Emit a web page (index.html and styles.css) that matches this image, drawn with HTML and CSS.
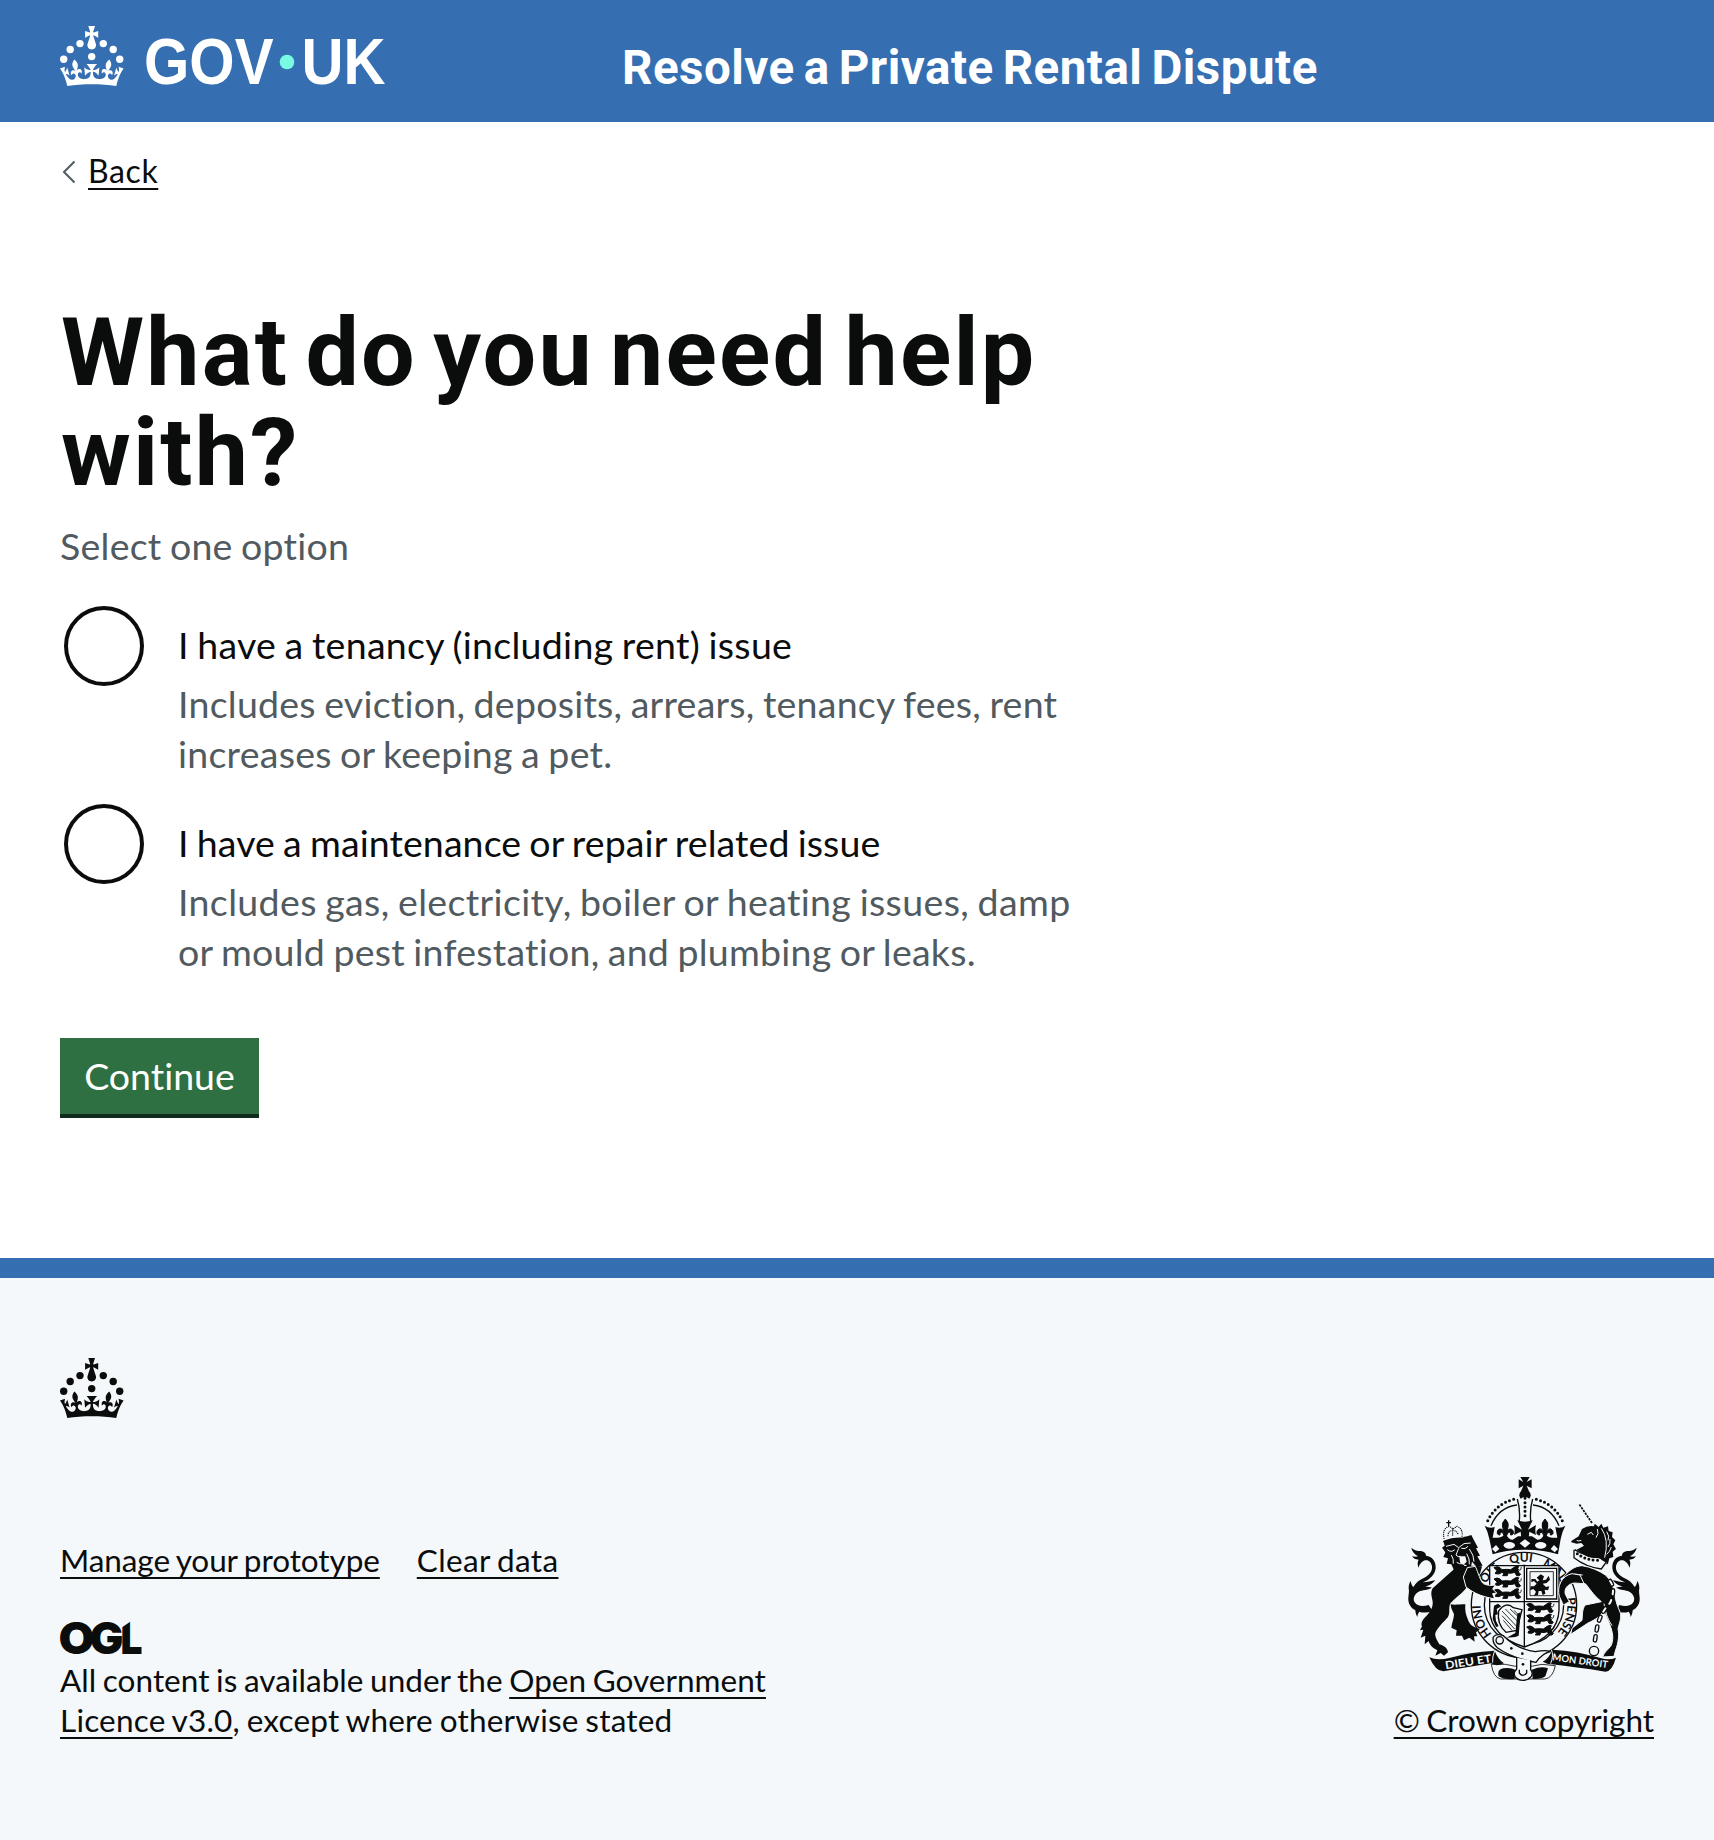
FILE: index.html
```html
<!DOCTYPE html>
<html lang="en">
<head>
<meta charset="utf-8">
<title>What do you need help with?</title>
<link rel="stylesheet" href="styles.css">
</head>
<body>
<header class="header">
  <a class="header-logo" href="#" aria-label="GOV.UK">
    <svg class="logo" viewBox="0 0 324 60" width="324" height="60">
      <defs>
        <g id="crown">
          <circle cx="20" cy="17.6" r="3.7"/><circle cx="10.2" cy="23.5" r="3.7"/><circle cx="3.7" cy="33.2" r="3.7"/>
          <circle cx="31.7" cy="30.6" r="3.7"/><circle cx="43.3" cy="17.6" r="3.7"/><circle cx="53.2" cy="23.5" r="3.7"/><circle cx="59.7" cy="33.2" r="3.7"/>
          <path d="M33.1,9.8c.2-.1.3-.3.5-.5l4.6,2.4v-6.8l-4.6,1.5c-.1-.2-.3-.3-.5-.5l1.9-5.9h-6.7l1.9,5.9c-.2.1-.3.3-.5.5l-4.6-1.5v6.8l4.6-2.4c.1.2.3.3.5.5l-2.6,8c-.9,2.8,1.2,5.7,4.1,5.7h0c3,0,5.1-2.9,4.1-5.7l-2.6-8ZM37,37.9s-3.4,3.8-4.1,6.1c2.2,0,4.2-.5,6.4-2.8l-.7,8.5c-2-2.8-4.4-4.1-5.7-3.8.1,3.1.5,6.7,5.8,7.2,3.7.3,6.7-1.5,7-3.8.4-2.6-2-4.3-3.7-1.6-1.4-4.5,2.4-6.1,4.9-3.2-1.9-4.5-1.8-7.7,2.4-10.9,3,4,2.6,7.3-1.2,11.1,2.4-1.3,6.2,0,4,4.6-1.2-2.8-3.7-2.2-4.2.2-.3,1.7.7,3.7,3,4.2,1.9.3,4.7-.9,7-5.9-1.3,0-2.4.7-3.9,1.7l2.4-8c.6,2.3,1.4,3.7,2.2,4.5.6-1.6.5-2.8,0-5.3l5,1.8c-2.6,3.6-5.2,8.7-7.3,17.5-7.4-1.1-15.7-1.7-24.5-1.7h0c-8.8,0-17.1.6-24.5,1.7-2.1-8.9-4.7-13.9-7.3-17.5l5-1.8c-.5,2.5-.6,3.7,0,5.3.8-.8,1.6-2.3,2.2-4.5l2.4,8c-1.5-1-2.6-1.7-3.9-1.7,2.3,5,5.2,6.2,7,5.9,2.3-.4,3.3-2.4,3-4.2-.5-2.4-3-3.1-4.2-.2-2.2-4.6,1.6-6,4-4.6-3.7-3.7-4.2-7.1-1.2-11.1,4.2,3.2,4.3,6.4,2.4,10.9,2.5-2.8,6.3-1.3,4.9,3.2-1.8-2.7-4.1-1-3.7,1.6.3,2.3,3.3,4.1,7,3.8,5.4-.5,5.7-4.2,5.8-7.2-1.3-.2-3.7,1-5.7,3.8l-.7-8.5c2.2,2.3,4.2,2.7,6.4,2.8-.7-2.3-4.1-6.1-4.1-6.1h10.6Z"/>
        </g>
      </defs>
      <use href="#crown"/>
      <text class="logo-word" x="84" y="58" textLength="129.500" lengthAdjust="spacingAndGlyphs">GOV</text>
      <text class="logo-word" x="241.500" y="58" textLength="84" lengthAdjust="spacingAndGlyphs">UK</text>
      <circle class="logo-dot" cx="227" cy="36" r="7.3"/>
    </svg>
  </a>
  <a class="service-name" href="#">Resolve a Private Rental Dispute</a>
</header>

<main class="main">
  <a class="back-link" href="#">
    <svg class="back-icon" viewBox="0 0 14 24" width="14" height="24"><path d="M12.500 1.500 2 12 12.500 22.500"/></svg><span class="link">Back</span>
  </a>
  <form class="form">
    <h1 class="title">What do you need help with?</h1>
    <p class="hint">Select one option</p>
    <div class="radios">
      <div class="radio">
        <input class="radio-input" type="radio" name="issue" id="tenancy">
        <div class="radio-text">
          <label class="radio-label" for="tenancy">I have a tenancy (including rent) issue</label>
          <p class="hint">Includes eviction, deposits, arrears, tenancy fees, rent increases or keeping a pet.</p>
        </div>
      </div>
      <div class="radio">
        <input class="radio-input" type="radio" name="issue" id="repair">
        <div class="radio-text">
          <label class="radio-label radio-label-tight" for="repair">I have a maintenance or repair related issue</label>
          <p class="hint"><span class="hint-loose">Includes gas, electricity, boiler or heating issues, damp</span> or mould pest infestation, and plumbing or leaks.</p>
        </div>
      </div>
    </div>
    <button class="button" type="button">Continue</button>
  </form>
</main>

<footer class="footer">
  <svg class="footer-crown" viewBox="0 0 64 60" width="64" height="60"><use href="#crown"/></svg>
  <div class="footer-row">
    <div class="footer-meta">
      <nav class="footer-links"><a class="link" href="#">Manage your prototype</a><a class="link link-loose" href="#">Clear data</a></nav>
      <svg class="ogl" viewBox="0 0 82 34" width="82" height="34">
        <text class="ogl-word" x="-1.500" y="33" textLength="36" lengthAdjust="spacingAndGlyphs">O</text>
        <text class="ogl-word" x="29.500" y="33" textLength="34" lengthAdjust="spacingAndGlyphs">G</text>
        <text class="ogl-word" x="60.500" y="33" textLength="22" lengthAdjust="spacingAndGlyphs">L</text>
        <path class="ogl-cut" d="M62-2h10v1.500l-9.500 6.500h-.5z"/>
      </svg>
      <p class="licence">All content is available under the <a class="link" href="#">Open Government <span class="licence-version">Licence v3.0</span></a><span class="licence-version">, except where otherwise stated</span></p>
    </div>
    <a class="copyright" href="#">
      <svg class="arms" viewBox="84 50 696 612" width="232" height="204">
        <defs>
          <path id="garter-path" d="M432 564A130 130 0 0 1 432 304A130 130 0 0 1 432 564"/>
          <path id="tail" d="M94 262C104 270 112 272 122 272C134 274 138 280 138 286C156 288 168 302 167 322C166 342 150 358 128 366C144 366 152 362 166 360C156 370 150 376 136 378C144 380 150 380 156 382C142 390 128 388 116 394C102 402 98 416 104 426C112 438 128 440 146 434L158 452C140 458 128 458 118 454C114 460 112 464 112 470C108 464 106 456 106 450C92 442 84 430 85 412C86 400 88 394 86 384C86 374 88 368 92 362C94 372 96 376 100 380C108 366 118 360 130 354C146 346 158 334 156 318C154 306 146 298 136 300C126 302 118 312 116 322C112 314 112 304 116 298C106 298 100 294 96 288C104 290 110 290 114 288C104 282 96 274 94 262Z"/>
          <g id="passant">
            <path class="arms-heavy" d="M342 322q10-6 18 0l6 6q14-2 26 0l12-8q4-4 12-2-4 6-2 12 2 8 8 12l-4 4h-8l-6-10q-10 4-20 2l-2 8h-14l4-6-6-4q-8 8-20 4l2-6 6 0z"/>
            <path class="arms-fine" d="M398 326q8-10 16 0t10-6"/>
          </g>
          <g id="passants"><use href="#passant"/><use href="#passant" y="34"/><use href="#passant" y="68"/></g>
          <path id="fleur" class="arms-heavy" d="M376 176q12 12 8 24l-4 14q4-10 14-8 8 4 6 14-2 4-8 4 2-8-4-8-6 0-8 10v12h-8v-12q-2-10-8-10-6 0-4 8-6 0-8-4-2-10 6-14 10-2 14 8l-4-14q-4-12 8-24z"/>
        </defs>

        <!-- crown -->
        <path d="M421 50h28l-9 15 15-8v27l-15-8 7 17h-24l7-17-14 8v-27l14 8z"/>
        <circle cx="435" cy="105" r="17"/>
        <path class="arms-bg" d="M421 116q14-12 28 0l2 62h-32z"/>
        <path class="arms-line" d="M412 116q9 30 6 66M458 116q-9 30-6 66M411 134q-54 6-78 62M459 134q54 6 78 62"/>
        <path class="arms-beads" d="M401 117Q344 132 319 190M469 117Q526 132 551 190"/>
        <path class="arms-beads" d="M435 114V176"/>
        <path d="M314 196Q328 206 344 200L338 232H352Q366 232 376 220Q386 238 398 238L414 228H456L472 238Q486 238 494 220Q504 232 518 232H532L526 200Q542 206 556 196Q546 214 542 236L534 282Q496 268 435 268Q374 268 338 282L328 236Q324 214 314 196Z"/>
        <path d="M412 180q22 8 46 0l-14 28 24-14q-4 16 0 30l-20-10-2 20h-22l-2-20-20 10q4-14 0-30l24 14z"/>
        <use href="#fleur"/><use href="#fleur" x="119"/>
        <path class="arms-bg" d="M348 254l10 12-12 10-10-10zM522 254l12 12-10 10-12-10zM435 237l16 12-16 13-16-13z"/>
        <ellipse class="arms-bg" cx="388" cy="255" rx="17" ry="10"/><ellipse class="arms-bg" cx="482" cy="255" rx="17" ry="10"/>

        <!-- garter -->
        <circle class="arms-line arms-bgfill" cx="432" cy="434" r="158"/>
        <circle class="arms-line" cx="432" cy="434" r="119"/>
        <g class="arms-motto">
          <text><textPath href="#garter-path" startOffset="108">HONI</textPath></text>
          <text><textPath href="#garter-path" startOffset="250">SOIT</textPath></text>
          <text><textPath href="#garter-path" startOffset="366">QUI</textPath></text>
          <text><textPath href="#garter-path" startOffset="464">MAL</textPath></text>
          <text><textPath href="#garter-path" startOffset="590">PENSE</textPath></text>
        </g>

        <!-- lion -->
        <use href="#tail"/>
        <path d="M232 318L158 384C150 398 156 410 158 424C160 442 148 458 136 470C126 480 122 490 126 498L120 510L130 508L122 532L136 526L134 552L146 542C150 556 158 562 172 570L166 586L182 578L192 586L204 576C202 562 192 556 178 552C172 540 164 530 166 518C174 500 190 486 204 470C212 456 204 440 212 428C224 414 250 398 262 378L300 340L306 318L276 316Z"/>
        <path d="M212 432C224 434 236 432 256 432C254 450 258 466 264 478C268 490 276 500 300 506L288 516L292 528L282 528L284 544L268 532L252 540L246 526L228 526L230 510L214 502C216 486 222 474 222 462C218 452 212 444 212 432Z"/>
        <path d="M190 242Q224 234 262 228L274 224L280 236L294 262L288 264L300 286L292 288L308 316L288 318L276 304L272 324L254 312L244 334L232 322L222 330L214 312L200 310L204 294L190 290L196 276L186 262L194 256Z"/>
        <path class="arms-cut" d="M198 258l24-6 14 10 16-12 20-2M202 268q12 10 22 0M244 264q12 4 20-6M236 264l-8 20q6 8 14 4M214 284q8 12 6 26M268 266q14 18 14 38M260 280q10 16 8 32M230 306q8 6 18 4"/>
        <path class="arms-bg" d="M238 288h18l4 16-10 10-10-8z"/>
        <path class="arms-bg" d="M190 240q-10-40 14-48h26q24 8 20 40-30 0-60 8z"/>
        <path class="arms-beads arms-beads-small" d="M192 234q-6-30 16-36l12 8 10-8q20 6 16 32M204 226q0-14 14-16 16 2 16 14M218 206v20"/>
        <path class="arms-line" d="M190 244q28-12 62-10M206 180v18M199 187h14"/>

        <!-- unicorn -->
        <use href="#tail" transform="matrix(-1 0 0 1 864 0)"/>
        <path d="M574 242L596 228L606 206Q624 194 642 198L644 190L656 200L664 190L670 202L684 198L686 212L698 216L696 230L706 240L700 252L708 266L698 274L700 290L688 294L684 310L670 316L662 296L626 292L590 268L612 256L604 248L590 250L574 246Z"/>
        <path class="arms-cut" d="M664 204q24 34 10 88M680 214q10 14 4 26M690 236q2 14-6 24M694 260q-4 14-14 22M622 222l12-6 6 8M652 206q6 14-4 26M590 240q6 4 14 0"/>
        <path class="arms-horn" d="M636 188L598 132"/>
        <path class="arms-bg" d="M580 268q30 24 76 26l24 14-8 22-96-32z"/>
        <path class="arms-beads" d="M592 280q24 20 64 20"/><path class="arms-line" d="M582 268v24q36 28 82 34l14-20M584 268q30 20 74 22"/>
        <path class="arms-paw" d="M552 348C568 330 582 318 606 316C632 320 656 330 676 344C692 358 698 376 704 398C706 424 714 440 722 460C724 480 716 492 714 506C718 520 716 546 706 572L702 588L668 590C672 576 684 568 692 558C702 540 698 520 694 506C688 486 676 466 672 450C660 470 646 478 624 488L606 500L572 522L576 504L606 480C608 462 606 446 616 434L664 424C644 408 632 390 618 372C600 362 580 358 562 366Z"/>
        <path class="arms-cut" d="M562 346q24-8 46-2M672 430q6 40 24 66"/>
        <path class="arms-chain" d="M690 362q18 24 0 66-28 28-38 70l-10 58"/>
        <path class="arms-chain-hole" d="M690 362q18 24 0 66-28 28-38 70l-10 58"/>
        <circle class="arms-line arms-bgfill" cx="642" cy="572" r="14"/>

        <!-- shield -->
        <path class="arms-line arms-bgfill" d="M329 316H537V450Q534 528 433 560Q332 528 329 450Z"/>
        <path class="arms-line" d="M433 316V560M329 424H537"/>
        <use href="#passants"/><use href="#passants" x="98" y="110"/>
        <path class="arms-line" d="M440 324h90v92h-90z"/><path class="arms-fine" d="M450 334h70v72h-70z"/>
        <path d="M482 342l10 6-4 12 10-2 8-12 4 12-10 10-12 2 10 10 10-2-4 12-10-2 2 12-8 4-4-12-8 0-2 12-12 2 6-12-8-8-10 4 2-12 10 0 8-8-8-8-8 4 0-10 12 0 6 8 6-4-8-8z"/>
        <path class="arms-line" d="M356 452q-6 40 22 64l32-6 16-62-26-6q-22-20-44 10z"/>
        <path class="arms-fine" d="M366 452l44 46M366 466l38 40M370 480l26 30M376 446l40 40M390 446l28 26M402 450l18 18"/>
        <path d="M412 460l10-4-6 70-10 4-26 2 26-14z"/>
        <path d="M342 436l12-6 10 8-14 8 4 16-8 2 2 18 8 16-8 2-10-24z"/>

        <!-- paws over the shield -->
        <path class="arms-paw" d="M250 350L262 322L286 318C296 340 300 360 310 370C324 376 334 376 346 374L338 386L350 398L338 400L344 416L318 410C296 404 278 396 258 380Z"/>
        <path class="arms-paw" d="M576 340C544 346 530 380 538 408L550 434L568 424L556 402C552 388 560 372 582 368L612 370L600 344Z"/>

        <!-- belt, ribbon and motto scrolls -->
        <path class="arms-bgfill arms-line" d="M340 530q8-12 30-4 40 40 96 48 34-6 44 0-22 4-42 32-72-12-116-44-16-14-12-32z"/>
        <circle class="arms-line" cx="359" cy="540" r="11"/>
        <circle cx="394" cy="564" r="4"/><circle cx="427" cy="580" r="4"/>
        <path class="arms-fine arms-bgfill" d="M334 612q6 40 28 44h132q24-2 32-40l-40-4q-56 14-110 0z"/>
        <path d="M356 648q-6-20 14-24 20-4 36 4l-2 28q-30 4-48-8zM456 628q28-12 48-4l-8 24q-14 10-38 8z"/>
        <path class="arms-line arms-bgfill" d="M410 592v34q-12 12-4 24 8 10 23 10t25-12q6-12-2-20v-28"/>
        <path class="arms-line" d="M418 628v10q10 14 22 0v-10"/><circle cx="429" cy="612" r="4"/>
        <path d="M148 591q24 10 60 2 60-18 136-22 10 26 28 38-14 6-22 6l-18-6-142 24q-24 0-42-42z"/>
        <path d="M708 592q-20 8-44 2-70-22-148-26-8 26-28 36 14 8 28 8 70 8 160 22 20 0 32-42z"/>
        <path class="arms-cut" d="M344 571q-8 20-6 36M514 568q8 16-2 42"/>
        <text class="arms-scroll" transform="translate(197 627) rotate(-9)" textLength="140" lengthAdjust="spacingAndGlyphs">DIEU ET</text>
        <text class="arms-scroll arms-scroll-small" transform="translate(516 600) rotate(8)" textLength="168" lengthAdjust="spacingAndGlyphs">MON DROIT</text>
      </svg>
      <span class="link">© Crown copyright</span>
    </a>
  </div>
</footer>
</body>
</html>
```
FILE: styles.css
```css
* { box-sizing: border-box; }
body { margin: 0; background: #fff; color: #0b0c0c; font-family: Lato, sans-serif; font-variant-ligatures: none; }
a { color: inherit; text-decoration: none; }
p, h1 { margin: 0; }
.link { text-decoration: underline; text-decoration-thickness: 2px; text-underline-offset: 5px; text-decoration-skip-ink: none; }

.header { display: flex; align-items: flex-start; height: 122px; padding: 26px 60px 0; background: #366fb1; color: #fff; }
.header-logo { display: block; height: 60px; }
.logo { display: block; overflow: visible; fill: #fff; }
.logo-word { font: 700 64px "Liberation Sans", sans-serif; }
.logo-dot { fill: #79fbe3; }
.service-name { margin: 12px 0 0 238px; font: 700 47.5px/60px Roboto, sans-serif; letter-spacing: 0.5px; word-spacing: -3.3px; white-space: nowrap; }

.main { height: 1136px; padding: 29px 60px 0; }
.back-link { display: flex; align-items: flex-start; gap: 12px; font-size: 32px; line-height: 40px; letter-spacing: 0.6px; }
.back-icon { margin: 9px 0 0 2px; fill: none; stroke: #505a5f; stroke-width: 2; }
.form { width: 1040px; padding-top: 112px; }
.title { padding-left: 1px; font: 700 95px/100px Roboto, sans-serif; letter-spacing: 2.2px; word-spacing: -9.5px; }
.hint { color: #505a5f; font-size: 37.5px; line-height: 50px; letter-spacing: 0.25px; word-spacing: -1.5px; }
.hint-loose { letter-spacing: 0.36px; }
.title + .hint { margin-top: 17.5px; }
.radios { display: grid; gap: 21.5px; padding-top: 31.5px; }
.radio { display: flex; gap: 34px; }
.radio-input { appearance: none; flex: none; width: 80px; height: 80px; margin: 4px 0 0 4px; border: 4px solid #0b0c0c; border-radius: 50%; background: #fff; }
.radio-text { padding-top: 17.5px; }
.radio-label { display: block; margin-bottom: 9px; font-size: 37.5px; line-height: 50px; letter-spacing: 0.3px; word-spacing: -1.5px; }
.radio-label-tight { letter-spacing: 0.09px; }
.button { display: block; width: 199px; height: 80px; margin-top: 61.5px; padding: 0; border: 0; border-bottom: 4px solid #0f2b1c; background: #2f7042; color: #fff; font: 37.5px/50px Lato, sans-serif; font-variant-ligatures: none; }

.footer { height: 582px; padding: 80px 60px 0; border-top: 20px solid #366fb1; background: #f4f8fb; font-size: 31.5px; line-height: 40px; letter-spacing: 0.03px; word-spacing: -1.5px; }
.footer-crown { display: block; fill: #0b0c0c; }
.footer-row { display: flex; justify-content: space-between; align-items: flex-end; height: 322px; }
.footer-links { display: flex; gap: 37px; letter-spacing: -0.08px; }
.link-loose { letter-spacing: 0.35px; }
.ogl { display: block; overflow: visible; margin-top: 41px; letter-spacing: 0; }
.ogl-word { font: 900 44px Inter, sans-serif; fill: #0b0c0c; }
.ogl-cut { fill: #f4f8fb; }
.licence { width: 740px; margin-top: 5px; }
.licence-version { letter-spacing: 0.2px; }
.copyright { display: flex; flex-direction: column; align-items: center; letter-spacing: -0.05px; }
.arms { display: block; margin-bottom: 19px; overflow: visible; fill: #0b0c0c; letter-spacing: 0; word-spacing: 0; }
.arms-bg { fill: #f4f8fb; }
.arms-line, .arms-fine, .arms-cut, .arms-beads, .arms-horn, .arms-chain, .arms-chain-hole { fill: none; stroke: #0b0c0c; stroke-width: 4; }
.arms-heavy { stroke: #0b0c0c; stroke-width: 3; }
.arms-fine { stroke-width: 2.5; }
.arms-cut { stroke: #f4f8fb; stroke-width: 3; }
.arms-beads { stroke-width: 9; stroke-linecap: round; stroke-dasharray: 0 13; }
.arms-beads-small { stroke-width: 4; stroke-dasharray: 0 6; }
.arms-horn { stroke-width: 5; stroke-dasharray: 7 3; }
.arms-chain { stroke-width: 14; stroke-linecap: round; stroke-dasharray: 12 18; }
.arms-chain-hole { stroke: #f4f8fb; stroke-width: 6; stroke-linecap: round; stroke-dasharray: 12 18; }
.arms-line.arms-bgfill, .arms-fine.arms-bgfill { fill: #f4f8fb; }
.arms-paw { stroke: #f4f8fb; stroke-width: 3; }
.arms-motto { font: 700 36px Lato, sans-serif; }
.arms-scroll { font: 700 33px Lato, sans-serif; fill: #f4f8fb; }
.arms-scroll-small { font-size: 29px; }
```
